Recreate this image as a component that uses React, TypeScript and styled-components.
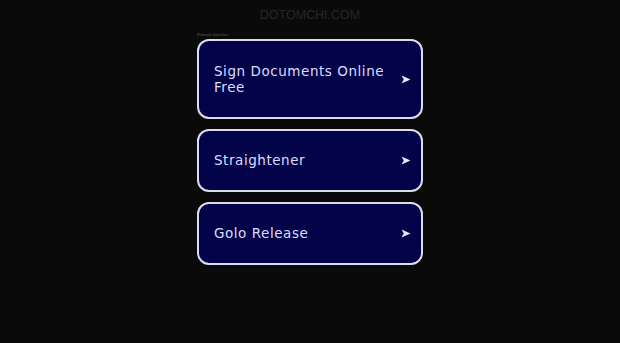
import React from "react";
import styled, { createGlobalStyle } from "styled-components";

const GlobalStyle = createGlobalStyle`
  html, body {
    margin: 0;
    padding: 0;
    background: #0a0a0a;
  }
  body {
    font-family: "Liberation Sans", Arial, sans-serif;
  }
`;

const Page = styled.div`
  min-height: 343px;
  display: flex;
  flex-direction: column;
  align-items: center;
  background: #0a0a0a;
`;

const Domain = styled.h1`
  margin: 8px 0 0;
  font-size: 12.5px;
  font-weight: 400;
  line-height: 15px;
  color: #262626;
`;

const Listing = styled.div`
  width: 226px;
  margin-top: 9px;
  display: flex;
  flex-direction: column;
`;

const Caption = styled.div`
  font-size: 4px;
  line-height: 5px;
  color: #5a5a5a;
  margin: 0 0 2px 0;
`;

const Cards = styled.div`
  display: flex;
  flex-direction: column;
  gap: 9.5px;
`;

const Card = styled.a`
  display: flex;
  align-items: center;
  justify-content: space-between;
  box-sizing: border-box;
  padding: 21.5px 10px 21.5px 15px;
  border: 2px solid #dcdcec;
  border-radius: 12px;
  background: #03034a;
  color: #dcdcff;
  text-decoration: none;
  font-family: "DejaVu Sans", "Liberation Sans", sans-serif;
  font-size: 13.5px;
  line-height: 16.5px;
  letter-spacing: 0.55px;
`;

const Label = styled.span`
  max-width: 185px;
`;

const Arrow = styled.svg`
  flex-shrink: 0;
  width: 10px;
  height: 9px;
`;

const searches = ["Sign Documents Online Free", "Straightener", "Golo Release"];

export default function App() {
  return (
    <Page>
      <GlobalStyle />
      <Domain>DOTOMCHI.COM</Domain>
      <Listing>
        <Caption>Related searches</Caption>
        <Cards>
          {searches.map((s) => (
            <Card key={s} href="#">
              <Label>{s}</Label>
              <Arrow viewBox="0 0 10 9">
                <path d="M0.5 0.5 L9.5 4.5 L0.5 8.5 L2.8 4.5 Z" fill="#e8e8ff" />
              </Arrow>
            </Card>
          ))}
        </Cards>
      </Listing>
    </Page>
  );
}
